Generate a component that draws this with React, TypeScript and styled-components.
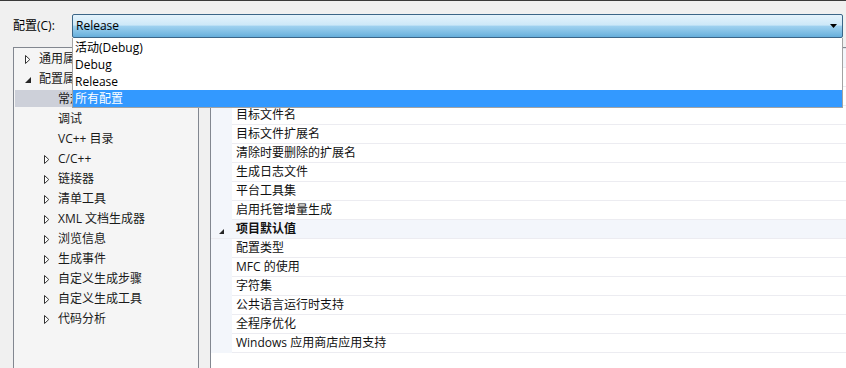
import React from "react";
import styled, { createGlobalStyle } from "styled-components";

const Global = createGlobalStyle`
  html, body { margin: 0; padding: 0; background: #f0f0f0; }
  body {
    font-family: "Open Sans", "Noto Sans CJK SC", sans-serif;
    font-size: 12px;
    color: #000;
  }
`;

const Window = styled.div`
  position: relative;
  width: 846px;
  height: 368px;
  overflow: hidden;
  box-sizing: border-box;
  background: #f0f0f0;
  border-top: 1px solid #3a3a3a;
`;

const Header = styled.div`
  display: flex;
  align-items: center;
  padding: 13px 0 0 13px;
  height: 24px;
`;

const Label = styled.span`
  width: 59px;
  line-height: 16px;
  white-space: nowrap;
`;

const Combo = styled.div`
  position: relative;
  width: 771px;
  height: 24px;
  box-sizing: border-box;
  border: 1px solid #3b6688;
  border-radius: 2px;
  background: linear-gradient(
    to bottom,
    #e4f3fc 0%,
    #cde8f8 45%,
    #9dd0ef 52%,
    #78bae2 85%,
    #66aedb 100%
  );
  display: flex;
  align-items: center;
  justify-content: space-between;
  padding: 0 5px 0 3px;
`;

const ComboText = styled.span`
  line-height: 16px;
`;

const Arrow = styled.svg`
  display: block;
  margin-top: -1px;
`;

const List = styled.div`
  position: absolute;
  top: calc(100% + 1px);
  left: -1px;
  width: 771px;
  box-sizing: border-box;
  background: #fff;
  border: 1px solid #a3a3a3;
  border-top: none;
  padding-top: 1px;
  z-index: 10;
`;

const ListItem = styled.div<{ $active?: boolean }>`
  height: 17px;
  line-height: 17px;
  padding-left: 2px;
  white-space: nowrap;
  background: ${(p) => (p.$active ? "#3399ff" : "transparent")};
  color: ${(p) => (p.$active ? "#fff" : "#000")};
`;

const Main = styled.div`
  display: flex;
  gap: 11px;
  padding-left: 13px;
  margin-top: 9px;
`;

const Tree = styled.div`
  flex: none;
  width: 186px;
  height: 340px;
  box-sizing: border-box;
  border: 1px solid #828790;
  background: #f5f5f5;
`;

const TreeRow = styled.div<{ $selected?: boolean }>`
  height: 20px;
  box-sizing: border-box;
  padding: 2px 1px 1px 1px;
  background: ${(p) => (p.$selected ? "#cdd0d9" : "transparent")};
  background-clip: content-box;
`;

const TreeContent = styled.div<{ $level: number }>`
  display: flex;
  align-items: center;
  height: 17px;
  padding-left: ${(p) => 10 + p.$level * 19}px;
  white-space: nowrap;
  overflow: hidden;
  color: #1a1a1a;
  line-height: 17px;
`;

const Toggle = styled.span`
  flex: none;
  width: 14px;
  height: 17px;
  display: flex;
  align-items: center;
`;

const Grid = styled.div`
  flex: none;
  width: 680px;
  height: 340px;
  box-sizing: border-box;
  border: 1px solid #828790;
  background: #fff;
  padding-top: 1px;
`;

const PropRow = styled.div`
  display: grid;
  grid-template-columns: 21px 1fr;
  height: 19px;
`;

const Margin = styled.div`
  background: #f3f6fb;
`;

const NameCell = styled.div`
  box-sizing: border-box;
  border-bottom: 1px solid #ececf1;
  padding-left: 4px;
  line-height: 18px;
  white-space: nowrap;
  color: #111;
`;

const CatRow = styled.div`
  display: grid;
  grid-template-columns: 25px 1fr;
  height: 19px;
  box-sizing: border-box;
  background: #f3f6fb;
  border-bottom: 1px solid #ececf1;
  box-shadow: 0 -1px 0 #e2e2e8;
`;

const CatToggle = styled.div`
  display: flex;
  align-items: center;
  padding-left: 8px;
  padding-top: 1px;
`;

const CatName = styled.div`
  font-weight: bold;
  line-height: 18px;
  white-space: nowrap;
  color: #111;
`;

const Collapsed = () => (
  <svg width="6" height="9" viewBox="0 0 6 9" style={{ display: "block", marginTop: 2 }}>
    <polygon points="0.5,0.5 4.8,4.5 0.5,8.5" fill="#fff" stroke="#333" strokeWidth="1" />
  </svg>
);

const Expanded = ({ size = 6 }: { size?: number }) => (
  <svg width={size} height={size} viewBox="0 0 6 6" style={{ display: "block", marginTop: 3 }}>
    <polygon points="6,0 6,6 0,6" fill="#262626" />
  </svg>
);

type Node = { label: string; level: number; state?: "open" | "closed"; selected?: boolean };

const treeNodes: Node[] = [
  { label: "通用属性", level: 0, state: "closed" },
  { label: "配置属性", level: 0, state: "open" },
  { label: "常规", level: 1, selected: true },
  { label: "调试", level: 1 },
  { label: "VC++ 目录", level: 1 },
  { label: "C/C++", level: 1, state: "closed" },
  { label: "链接器", level: 1, state: "closed" },
  { label: "清单工具", level: 1, state: "closed" },
  { label: "XML 文档生成器", level: 1, state: "closed" },
  { label: "浏览信息", level: 1, state: "closed" },
  { label: "生成事件", level: 1, state: "closed" },
  { label: "自定义生成步骤", level: 1, state: "closed" },
  { label: "自定义生成工具", level: 1, state: "closed" },
  { label: "代码分析", level: 1, state: "closed" },
];

type GridItem = { cat?: boolean; label: string };

const gridItems: GridItem[] = [
  { cat: true, label: "常规" },
  { label: "输出目录" },
  { label: "中间目录" },
  { label: "目标文件名" },
  { label: "目标文件扩展名" },
  { label: "清除时要删除的扩展名" },
  { label: "生成日志文件" },
  { label: "平台工具集" },
  { label: "启用托管增量生成" },
  { cat: true, label: "项目默认值" },
  { label: "配置类型" },
  { label: "MFC 的使用" },
  { label: "字符集" },
  { label: "公共语言运行时支持" },
  { label: "全程序优化" },
  { label: "Windows 应用商店应用支持" },
];

const options = ["活动(Debug)", "Debug", "Release", "所有配置"];

export default function App() {
  return (
    <>
      <Global />
      <Window>
        <Header>
          <Label>配置(C):</Label>
          <Combo>
            <ComboText>Release</ComboText>
            <Arrow width="7" height="4" viewBox="0 0 7 4">
              <polygon points="0,0 7,0 3.5,4" fill="#000" />
            </Arrow>
            <List>
              {options.map((o, i) => (
                <ListItem key={o} $active={i === 3}>
                  {o}
                </ListItem>
              ))}
            </List>
          </Combo>
        </Header>
        <Main>
          <Tree>
            {treeNodes.map((n) => (
              <TreeRow key={n.label} $selected={n.selected}>
                <TreeContent $level={n.level}>
                  <Toggle>
                    {n.state === "closed" && <Collapsed />}
                    {n.state === "open" && <Expanded />}
                  </Toggle>
                  {n.label}
                </TreeContent>
              </TreeRow>
            ))}
          </Tree>
          <Grid>
            {gridItems.map((g) =>
              g.cat ? (
                <CatRow key={g.label}>
                  <CatToggle>
                    <Expanded size={5} />
                  </CatToggle>
                  <CatName>{g.label}</CatName>
                </CatRow>
              ) : (
                <PropRow key={g.label}>
                  <Margin />
                  <NameCell>{g.label}</NameCell>
                </PropRow>
              )
            )}
          </Grid>
        </Main>
      </Window>
    </>
  );
}
